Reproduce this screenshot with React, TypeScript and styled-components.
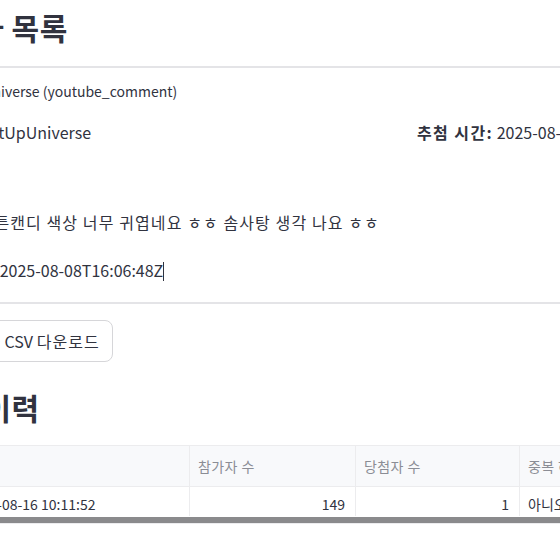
import React from 'react';
import styled, { createGlobalStyle } from 'styled-components';

const GlobalStyle = createGlobalStyle`
  html, body {
    margin: 0;
    padding: 0;
    background: #ffffff;
    overflow: hidden;
  }
  body {
    font-family: "Noto Sans CJK KR", "Noto Sans", sans-serif;
    color: #31333f;
  }
`;

const Main = styled.main`
  width: 1000px;
  margin-left: -80px;
`;

const Heading = styled.h2<{ $top: number }>`
  margin: ${({ $top }) => $top}px 0 0;
  font-size: 30px;
  line-height: 36px;
  font-weight: 700;
  letter-spacing: 0.5px;
  color: #31333f;
`;

const Divider = styled.hr<{ $top: number }>`
  margin: ${({ $top }) => $top}px 0 0;
  border: none;
  height: 2px;
  background: #e4e4e7;
`;

const Caption = styled.div`
  margin-top: 13px;
  font-size: 14px;
  line-height: 20px;
  color: #31333f;
`;

const Columns = styled.div`
  display: grid;
  grid-template-columns: 481px 1fr;
  gap: 16px;
  margin-top: 19px;
`;

const Line = styled.div<{ $top?: number }>`
  margin-top: ${({ $top }) => $top ?? 0}px;
  font-size: 16px;
  line-height: 24px;
  white-space: nowrap;
`;

const Label = styled.b`
  font-weight: 700;
  letter-spacing: 1.4px;
`;

// hangul runs a little wider, as in the original page
const Ko = styled.span`
  letter-spacing: 1.1px;
`;

const Caret = styled.span`
  display: inline-block;
  width: 1px;
  height: 19px;
  background: #31333f;
  vertical-align: -4px;
`;

const Button = styled.button`
  margin-top: 16px;
  height: 42px;
  padding: 0 12px;
  border: 1px solid #d6d6d9;
  border-radius: 8px;
  background: #ffffff;
  font-family: inherit;
  font-size: 16px;
  color: #31333f;
`;

const Table = styled.div`
  margin-top: 20px;
  border-top: 1px solid #ececee;
  border-bottom: 1px solid #ececee;
`;

const Row = styled.div<{ $head?: boolean }>`
  display: grid;
  grid-template-columns: 38px 232px 166px 164px 226px;
  height: ${({ $head }) => ($head ? 40 : 29)}px;
  background: ${({ $head }) => ($head ? '#f8f9fb' : '#ffffff')};
  border-bottom: ${({ $head }) => ($head ? '1px solid #ececee' : 'none')};
`;

const Cell = styled.div<{ $head?: boolean; $num?: boolean }>`
  display: flex;
  align-items: center;
  justify-content: ${({ $num }) => ($num ? 'flex-end' : 'flex-start')};
  padding: ${({ $head }) => ($head ? '0 8px' : '4px 10px 0 8px')};
  border-right: 1px solid #ececee;
  font-size: 14px;
  letter-spacing: ${({ $head }) => ($head ? '0.4px' : '0')};
  color: ${({ $head }) => ($head ? '#8b8d95' : '#31333f')};
  white-space: nowrap;
  overflow: hidden;
`;

const Scrollbar = styled.div`
  height: 6px;
  margin-top: 1px;
  background: #8a8a8c;
`;

const App: React.FC = () => {
  return (
    <>
      <GlobalStyle />
      <Main>
        <Heading $top={9}>당첨자 목록</Heading>
        <Divider $top={21} />
        <Caption>• @GetUpUniverse (youtube_comment)</Caption>
        <Columns>
          <Line>
            <Label>당첨자:</Label> GetUpUniverse
          </Line>
          <Line>
            <Label>추첨 시간:</Label> 2025-08-16 10:11:52
          </Line>
        </Columns>
        <Line $top={66}>
          <Label>코멘트:</Label> <Ko>코튼캔디 색상 너무 귀엽네요 ㅎㅎ 솜사탕 생각 나요 ㅎㅎ</Ko>
        </Line>
        <Line $top={24}>
          <Label>작성 시간:</Label> 2025-08-08T16:06:48Z
          <Caret />
        </Line>
        <Divider $top={20} />
        <Button>
          <Ko>당첨 결과</Ko> CSV <Ko>다운로드</Ko>
        </Button>
        <Heading $top={27}>추첨 이력</Heading>
        <Table>
          <Row $head>
            <Cell $head />
            <Cell $head>일시</Cell>
            <Cell $head>참가자 수</Cell>
            <Cell $head>당첨자 수</Cell>
            <Cell $head>중복 허용</Cell>
          </Row>
          <Row>
            <Cell $num>0</Cell>
            <Cell>2025-08-16 10:11:52</Cell>
            <Cell $num>149</Cell>
            <Cell $num>1</Cell>
            <Cell>아니오</Cell>
          </Row>
          <Scrollbar />
        </Table>
      </Main>
    </>
  );
};

export default App;
